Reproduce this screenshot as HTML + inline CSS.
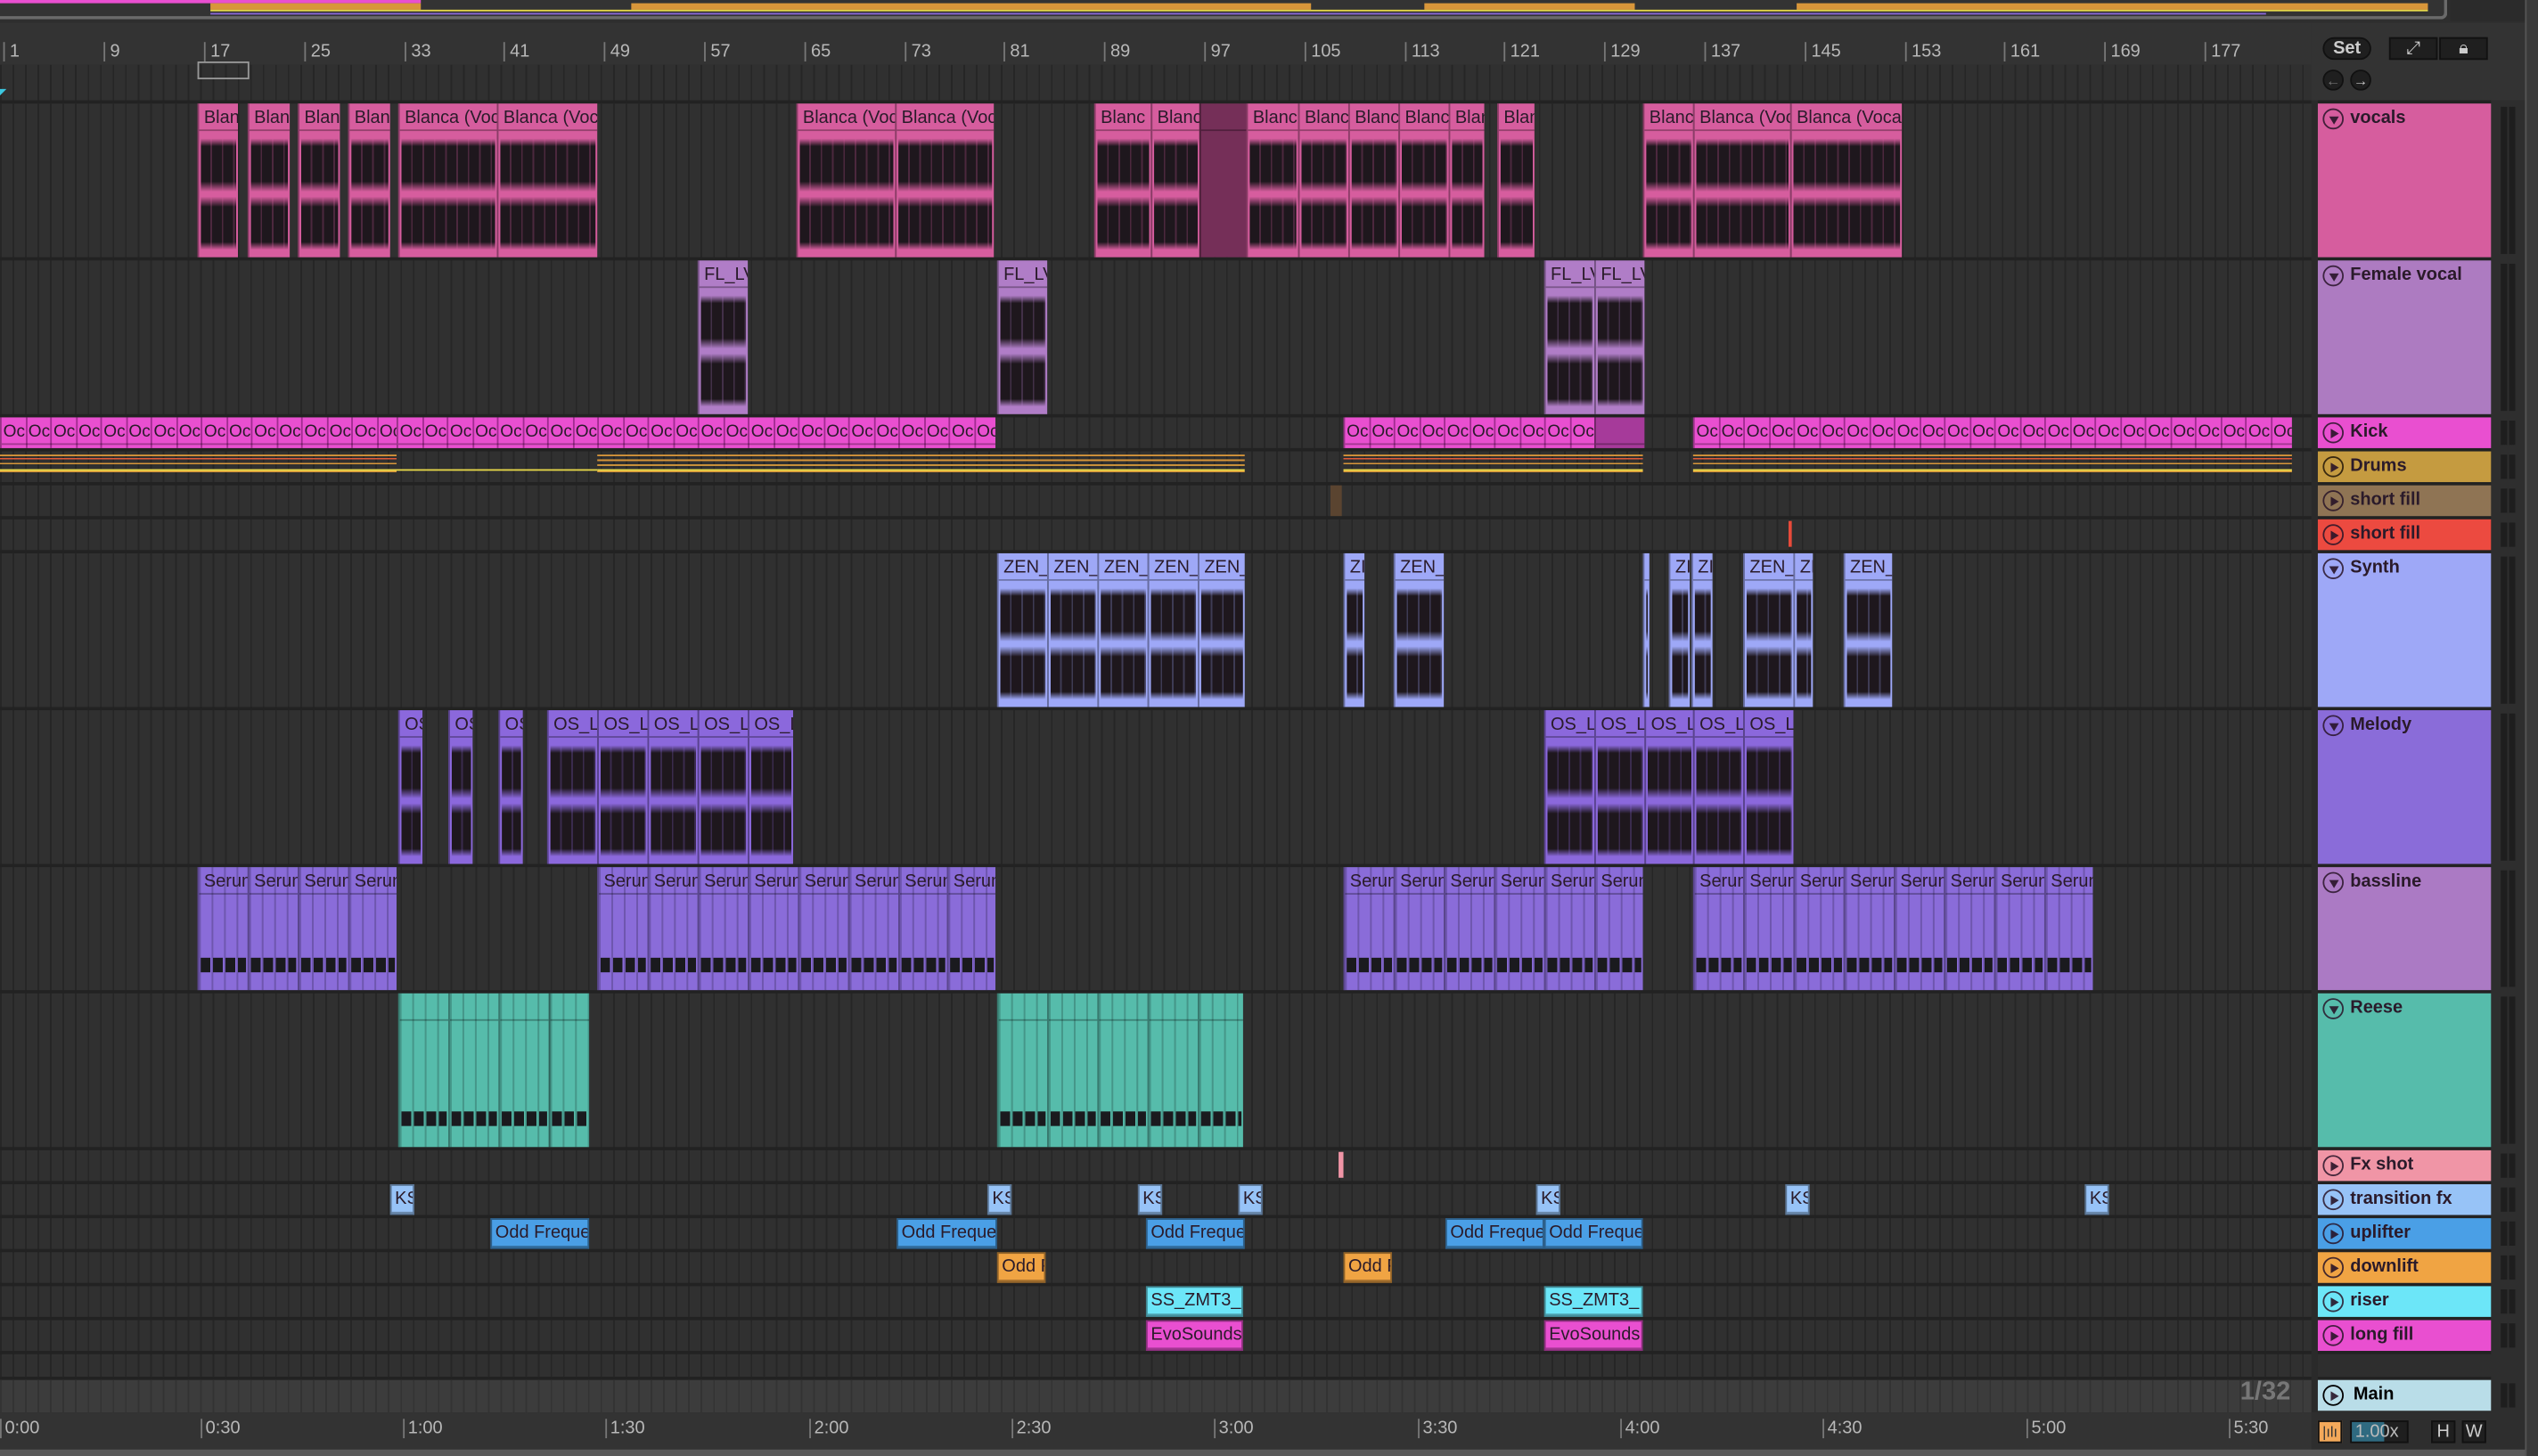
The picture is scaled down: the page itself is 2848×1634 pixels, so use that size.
<!DOCTYPE html>
<html><head><meta charset="utf-8"><style>
*{margin:0;padding:0;box-sizing:border-box}
html,body{width:2848px;height:1634px;overflow:hidden;background:#2b2b2b}
#w{position:absolute;left:0;top:0;width:1568px;height:900px;transform:scale(1.8163,1.8156);transform-origin:0 0;font-family:"Liberation Sans",sans-serif;background:#2e2e2e;overflow:hidden}
.abs{position:absolute}
.grid{position:absolute;left:0;width:1428px;background:#303030 repeating-linear-gradient(90deg,#262626 0 1px,transparent 1px 7.73px)}
.sep{position:absolute;left:0;width:1568px;height:2px;background:#222}
.t{position:absolute;left:0;width:1428px}
.c{position:absolute;top:0;height:100%;border-left:1px solid rgba(0,0,0,.35);overflow:hidden;font-size:11px;line-height:15px;padding-left:3px;padding-top:2px;white-space:nowrap;color:#2a1b2a}
.c::before{content:"";position:absolute;left:0;right:0;top:16px;height:1px;background:rgba(0,0,0,.3)}
.w::after{content:"";position:absolute;left:1px;right:1px;top:17px;bottom:0;background:repeating-linear-gradient(90deg,#1e171d 0 6px,rgba(30,23,29,.75) 6px 7px);-webkit-mask:linear-gradient(transparent 6%,#000 12%,#000 40%,transparent 48%,transparent 52%,#000 60%,#000 88%,transparent 94%);mask:linear-gradient(transparent 6%,#000 12%,#000 40%,transparent 48%,transparent 52%,#000 60%,#000 88%,transparent 94%)}
.m::after{content:"";position:absolute;left:1px;right:1px;bottom:14%;height:9px;background:repeating-linear-gradient(90deg,#1a1a1e 0 6px,transparent 6px 7.7px)}
.m{background-image:repeating-linear-gradient(90deg,rgba(0,0,0,.2) 0 1px,transparent 1px 7.7px)!important}
.v{background:#d65d9e}.fv{background:#b07dc7}.sy{background:#9ea8f7}.me{background:#8b68dc}.ba{background:#8a6cd9}.re{background:#56bcab}
.sm{font-size:11px;line-height:17px;border:1px solid rgba(0,0,0,.4);padding-left:2px;padding-top:0}
.k span{display:inline-block;width:15.5px;height:19px;border-right:1px solid rgba(90,10,80,.5);font-size:10.5px;line-height:19px;text-align:left;padding-left:1px;overflow:hidden}
.hd{position:absolute;left:1432px;width:107px;font-size:11px;font-weight:bold;color:#2a1a2a;padding-left:20px;line-height:19px}
.hd i{position:absolute;left:3px;top:3px;width:13px;height:13px;border:1.3px solid rgba(40,20,40,.85);border-radius:50%}
.hd i::after{content:"";position:absolute;left:4px;top:2.5px;border-left:5px solid rgba(40,20,40,.9);border-top:3.5px solid transparent;border-bottom:3.5px solid transparent}
.hd i.d::after{left:2.5px;top:4px;border-top:5px solid rgba(40,20,40,.9);border-left:3.5px solid transparent;border-right:3.5px solid transparent;border-bottom:0}
.mt{position:absolute;left:1545px;width:10px;background:linear-gradient(90deg,#1e1e1e 0 4px,transparent 4px 5px,#1e1e1e 5px 9px,transparent 9px)}
.ruler span{position:absolute;top:26px;font-size:11px;color:#b8b8b8;border-left:1px solid #777;padding-left:3px;height:12px;line-height:12px}
.tm span{position:absolute;top:877px;font-size:11px;color:#b8b8b8;border-left:1px solid #777;padding-left:2px;line-height:12px}
.btn{position:absolute;background:#1f1f1f;border:1px solid #111;color:#ccc;font-size:11px;text-align:center}
</style></head><body><div id="w">

<div class="abs" style="left:0;top:0;width:1512px;height:12px;background:#333;border-bottom:2px solid #6a6a6a;border-right:2px solid #6a6a6a;border-radius:0 0 4px 0"></div>
<div class="abs" style="left:0;top:0;width:260px;height:2px;background:#e94fd0"></div>
<div class="abs" style="left:130px;top:2px;width:130px;height:4px;background:#d8963a"></div>
<div class="abs" style="left:390px;top:2px;width:420px;height:4px;background:#d8963a"></div>
<div class="abs" style="left:880px;top:2px;width:130px;height:4px;background:#d8963a"></div>
<div class="abs" style="left:1110px;top:2px;width:390px;height:4px;background:#d8963a"></div>
<div class="abs" style="left:130px;top:6px;width:1370px;height:1px;background:#e8d94a"></div>
<div class="abs" style="left:130px;top:8px;width:1270px;height:1px;background:#8b68dc"></div>
<div class="abs" style="left:1514px;top:0;width:54px;height:13px;background:#2b2b2b"></div>

<div class="abs" style="left:0;top:14px;width:1428px;height:26px;background:#333"></div>
<div class="ruler">
<span style="left:2px">1</span><span style="left:64px">9</span><span style="left:126px">17</span><span style="left:188px">25</span><span style="left:250px">33</span><span style="left:311px">41</span><span style="left:373px">49</span><span style="left:435px">57</span><span style="left:497px">65</span><span style="left:559px">73</span><span style="left:620px">81</span><span style="left:682px">89</span><span style="left:744px">97</span><span style="left:806px">105</span><span style="left:868px">113</span><span style="left:929px">121</span><span style="left:991px">129</span><span style="left:1053px">137</span><span style="left:1115px">145</span><span style="left:1177px">153</span><span style="left:1238px">161</span><span style="left:1300px">169</span><span style="left:1362px">177</span>
</div>
<div class="grid" style="top:40px;height:22px"></div>
<div class="abs" style="left:122px;top:38px;width:32px;height:11px;border:1px solid #999"></div>
<div class="abs" style="left:0;top:55px;border-left:4px solid #3cc7e0;border-bottom:4px solid transparent"></div>
<div class="abs" style="left:1428px;top:14px;width:140px;height:48px;background:#333"></div>
<div class="btn" style="left:1435px;top:23px;width:30px;height:14px;border-radius:8px;line-height:13px;font-weight:bold">Set</div>
<div class="btn" style="left:1476px;top:23px;width:30px;height:14px;line-height:12px">⤢</div>
<div class="btn" style="left:1507px;top:23px;width:30px;height:14px;line-height:12px">🔒︎</div>
<div class="btn" style="left:1435px;top:43px;width:13px;height:13px;border-radius:50%;line-height:12px;font-size:9px;color:#777">←</div>
<div class="btn" style="left:1452px;top:43px;width:13px;height:13px;border-radius:50%;line-height:12px;font-size:9px">→</div>

<div class="grid" style="top:64px;height:789px"></div>
<div class="sep" style="top:62px"></div><div class="sep" style="top:159px"></div><div class="sep" style="top:256px"></div><div class="sep" style="top:277px"></div><div class="sep" style="top:298px"></div><div class="sep" style="top:319px"></div><div class="sep" style="top:340px"></div><div class="sep" style="top:437px"></div><div class="sep" style="top:534px"></div><div class="sep" style="top:612px"></div><div class="sep" style="top:709px"></div><div class="sep" style="top:730px"></div><div class="sep" style="top:751px"></div><div class="sep" style="top:772px"></div><div class="sep" style="top:793px"></div><div class="sep" style="top:814px"></div><div class="sep" style="top:835px"></div><div class="sep" style="top:851px"></div>
<div class="abs" style="left:1428px;top:62px;width:4px;height:811px;background:#2a2a2a"></div>
<div class="abs" style="left:1539px;top:62px;width:29px;height:811px;background:#2e2e2e"></div>
<div class="abs" style="left:1560px;top:0;width:8px;height:900px;background:#3a3a3a;border-left:1px solid #555"></div>

<div class="t" style="top:64px;height:95px">
<div class="c v w" style="left:122px;width:25px">Blan</div><div class="c v w" style="left:153px;width:26px">Blan</div><div class="c v w" style="left:184px;width:26px">Blan</div><div class="c v w" style="left:215px;width:26px">Blan</div><div class="c v w" style="left:246px;width:61px">Blanca (Vocal</div><div class="c v w" style="left:307px;width:62px">Blanca (Vocal</div>
<div class="c v w" style="left:492px;width:61px">Blanca (Vocal</div><div class="c v w" style="left:553px;width:61px">Blanca (Vocal</div>
<div class="c v w" style="left:676px;width:35px">Blanc</div><div class="c v w" style="left:711px;width:30px">Blanc</div><div class="c" style="left:741px;width:29px;background:#752f58"></div>
<div class="c v w" style="left:770px;width:32px">Blanc</div><div class="c v w" style="left:802px;width:31px">Blanc</div><div class="c v w" style="left:833px;width:31px">Blanc</div><div class="c v w" style="left:864px;width:31px">Blanc</div><div class="c v w" style="left:895px;width:22px">Blan</div><div class="c v w" style="left:925px;width:23px">Blan</div>
<div class="c v w" style="left:1015px;width:31px">Blanc</div><div class="c v w" style="left:1046px;width:60px">Blanca (Vocal</div><div class="c v w" style="left:1106px;width:69px">Blanca (Vocal</div>
</div>
<div class="t" style="top:161px;height:95px">
<div class="c fv w" style="left:431px;width:31px">FL_LV</div><div class="c fv w" style="left:616px;width:31px">FL_LV</div><div class="c fv w" style="left:954px;width:31px">FL_LV</div><div class="c fv w" style="left:985px;width:31px">FL_LV</div>
</div>
<div class="t k" style="top:258px;height:19px;font-size:0">
<div class="c" style="left:0;width:245px;background:#e94fd0;padding:0"><span>Oc</span><span>Oc</span><span>Oc</span><span>Oc</span><span>Oc</span><span>Oc</span><span>Oc</span><span>Oc</span><span>Oc</span><span>Oc</span><span>Oc</span><span>Oc</span><span>Oc</span><span>Oc</span><span>Oc</span><span>Oc</span></div>
<div class="c" style="left:245px;width:370px;background:#e94fd0;padding:0"><span>Oc</span><span>Oc</span><span>Oc</span><span>Oc</span><span>Oc</span><span>Oc</span><span>Oc</span><span>Oc</span><span>Oc</span><span>Oc</span><span>Oc</span><span>Oc</span><span>Oc</span><span>Oc</span><span>Oc</span><span>Oc</span><span>Oc</span><span>Oc</span><span>Oc</span><span>Oc</span><span>Oc</span><span>Oc</span><span>Oc</span><span>Oc</span></div>
<div class="c" style="left:830px;width:155px;background:#e94fd0;padding:0"><span>Oc</span><span>Oc</span><span>Oc</span><span>Oc</span><span>Oc</span><span>Oc</span><span>Oc</span><span>Oc</span><span>Oc</span><span>Oc</span></div>
<div class="c" style="left:985px;width:31px;background:#a63a9a"></div>
<div class="c" style="left:1046px;width:370px;background:#e94fd0;padding:0"><span>Oc</span><span>Oc</span><span>Oc</span><span>Oc</span><span>Oc</span><span>Oc</span><span>Oc</span><span>Oc</span><span>Oc</span><span>Oc</span><span>Oc</span><span>Oc</span><span>Oc</span><span>Oc</span><span>Oc</span><span>Oc</span><span>Oc</span><span>Oc</span><span>Oc</span><span>Oc</span><span>Oc</span><span>Oc</span><span>Oc</span><span>Oc</span></div>
</div>
<div class="abs" style="left:0;top:281px;width:245px;height:12px;background:repeating-linear-gradient(#d8963a 0 1px,transparent 1px 2px,#e05a3a 2px 3px,transparent 3px 5px,#d8963a 5px 6px,transparent 6px 9px,#e8d94a 9px 10px,transparent 10px)"></div>
<div class="abs" style="left:245px;top:290px;width:124px;height:1px;background:#e8d94a"></div>
<div class="abs" style="left:369px;top:281px;width:400px;height:12px;background:repeating-linear-gradient(#d8963a 0 1px,transparent 1px 3px,#d8963a 3px 4px,transparent 4px 6px,#c8903a 6px 7px,transparent 7px 9px,#e8d94a 9px 10px,transparent 10px)"></div>
<div class="abs" style="left:830px;top:281px;width:185px;height:12px;background:repeating-linear-gradient(#d8963a 0 1px,transparent 1px 2px,#e05a3a 2px 3px,transparent 3px 5px,#d8963a 5px 6px,transparent 6px 9px,#e8d94a 9px 10px,transparent 10px)"></div>
<div class="abs" style="left:1046px;top:281px;width:370px;height:12px;background:repeating-linear-gradient(#d8963a 0 1px,transparent 1px 2px,#e05a3a 2px 3px,transparent 3px 5px,#d8963a 5px 6px,transparent 6px 9px,#e8d94a 9px 10px,transparent 10px)"></div>
<div class="abs" style="left:822px;top:300px;width:7px;height:19px;background:#5a4430"></div>
<div class="abs" style="left:1105px;top:322px;width:2px;height:16px;background:#e84a3a"></div>
<div class="t" style="top:342px;height:95px">
<div class="c sy w" style="left:616px;width:31px">ZEN_</div><div class="c sy w" style="left:647px;width:31px">ZEN_</div><div class="c sy w" style="left:678px;width:31px">ZEN_</div><div class="c sy w" style="left:709px;width:31px">ZEN_</div><div class="c sy w" style="left:740px;width:29px">ZEN_</div>
<div class="c sy w" style="left:830px;width:13px">ZI</div><div class="c sy w" style="left:861px;width:31px">ZEN_</div>
<div class="c sy w" style="left:1015px;width:4px"></div><div class="c sy w" style="left:1031px;width:13px">ZI</div><div class="c sy w" style="left:1045px;width:13px">ZI</div><div class="c sy w" style="left:1077px;width:31px">ZEN_</div><div class="c sy w" style="left:1108px;width:12px">ZI</div><div class="c sy w" style="left:1139px;width:30px">ZEN_</div>
</div>
<div class="t" style="top:439px;height:95px">
<div class="c me w" style="left:246px;width:15px">OS</div><div class="c me w" style="left:277px;width:15px">OS</div><div class="c me w" style="left:308px;width:15px">OS</div><div class="c me w" style="left:338px;width:31px">OS_L</div><div class="c me w" style="left:369px;width:31px">OS_L</div><div class="c me w" style="left:400px;width:31px">OS_L</div><div class="c me w" style="left:431px;width:31px">OS_L</div><div class="c me w" style="left:462px;width:28px">OS_L</div>
<div class="c me w" style="left:954px;width:31px">OS_L</div><div class="c me w" style="left:985px;width:31px">OS_L</div><div class="c me w" style="left:1016px;width:30px">OS_L</div><div class="c me w" style="left:1046px;width:31px">OS_L</div><div class="c me w" style="left:1077px;width:31px">OS_L</div>
</div>
<div class="t" style="top:536px;height:76px">
<div class="c ba m" style="left:122px;width:31px">Serum</div><div class="c ba m" style="left:153px;width:31px">Serum</div><div class="c ba m" style="left:184px;width:31px">Serum</div><div class="c ba m" style="left:215px;width:30px">Serum</div>
<div class="c ba m" style="left:369px;width:31px">Serum</div><div class="c ba m" style="left:400px;width:31px">Serum</div><div class="c ba m" style="left:431px;width:31px">Serum</div><div class="c ba m" style="left:462px;width:31px">Serum</div><div class="c ba m" style="left:493px;width:31px">Serum</div><div class="c ba m" style="left:524px;width:31px">Serum</div><div class="c ba m" style="left:555px;width:30px">Serum</div><div class="c ba m" style="left:585px;width:30px">Serum</div>
<div class="c ba m" style="left:830px;width:31px">Serum</div><div class="c ba m" style="left:861px;width:31px">Serum</div><div class="c ba m" style="left:892px;width:31px">Serum</div><div class="c ba m" style="left:923px;width:31px">Serum</div><div class="c ba m" style="left:954px;width:31px">Serum</div><div class="c ba m" style="left:985px;width:30px">Serum</div>
<div class="c ba m" style="left:1046px;width:31px">Serum</div><div class="c ba m" style="left:1077px;width:31px">Serum</div><div class="c ba m" style="left:1108px;width:31px">Serum</div><div class="c ba m" style="left:1139px;width:31px">Serum</div><div class="c ba m" style="left:1170px;width:31px">Serum</div><div class="c ba m" style="left:1201px;width:31px">Serum</div><div class="c ba m" style="left:1232px;width:31px">Serum</div><div class="c ba m" style="left:1263px;width:30px">Serum</div>
</div>
<div class="t" style="top:614px;height:95px">
<div class="c re m" style="left:246px;width:31px"></div><div class="c re m" style="left:277px;width:31px"></div><div class="c re m" style="left:308px;width:31px"></div><div class="c re m" style="left:339px;width:25px"></div>
<div class="c re m" style="left:616px;width:31px"></div><div class="c re m" style="left:647px;width:31px"></div><div class="c re m" style="left:678px;width:31px"></div><div class="c re m" style="left:709px;width:31px"></div><div class="c re m" style="left:740px;width:28px"></div>
</div>
<div class="abs" style="left:827px;top:712px;width:3px;height:16px;background:#f095a6"></div>
<div class="t" style="top:732px;height:19px">
<div class="c sm" style="left:241px;width:15px;background:#97c3f7">KS</div><div class="c sm" style="left:610px;width:15px;background:#97c3f7">KS</div><div class="c sm" style="left:703px;width:15px;background:#97c3f7">KS</div><div class="c sm" style="left:765px;width:15px;background:#97c3f7">KS</div><div class="c sm" style="left:949px;width:15px;background:#97c3f7">KS</div><div class="c sm" style="left:1103px;width:15px;background:#97c3f7">KS</div><div class="c sm" style="left:1288px;width:15px;background:#97c3f7">KS</div>
</div>
<div class="t" style="top:753px;height:19px">
<div class="c sm" style="left:303px;width:61px;background:#4a9fe6">Odd Frequency</div><div class="c sm" style="left:554px;width:62px;background:#4a9fe6">Odd Frequency</div><div class="c sm" style="left:708px;width:61px;background:#4a9fe6">Odd Frequency</div><div class="c sm" style="left:893px;width:61px;background:#4a9fe6">Odd Frequency</div><div class="c sm" style="left:954px;width:61px;background:#4a9fe6">Odd Frequency</div>
</div>
<div class="t" style="top:774px;height:19px">
<div class="c sm" style="left:616px;width:30px;background:#f0a443">Odd F</div><div class="c sm" style="left:830px;width:30px;background:#f0a443">Odd F</div>
</div>
<div class="t" style="top:795px;height:19px">
<div class="c sm" style="left:708px;width:60px;background:#6ce6f8">SS_ZMT3_</div><div class="c sm" style="left:954px;width:61px;background:#6ce6f8">SS_ZMT3_</div>
</div>
<div class="t" style="top:816px;height:19px">
<div class="c sm" style="left:708px;width:60px;background:#e94fd0">EvoSounds</div><div class="c sm" style="left:954px;width:61px;background:#e94fd0">EvoSounds</div>
</div>
<div class="abs" style="left:0;top:853px;width:1428px;height:20px;background:#3c3c3c repeating-linear-gradient(90deg,#333 0 1px,transparent 1px 7.73px)"></div>
<div class="abs" style="left:1384px;top:852px;font-size:16px;font-weight:bold;color:#777">1/32</div>
<div class="abs" style="left:0;top:873px;width:1428px;height:27px;background:#333"></div>
<div class="tm"><span style="left:0">0:00</span><span style="left:124px">0:30</span><span style="left:249px">1:00</span><span style="left:374px">1:30</span><span style="left:500px">2:00</span><span style="left:625px">2:30</span><span style="left:750px">3:00</span><span style="left:876px">3:30</span><span style="left:1001px">4:00</span><span style="left:1126px">4:30</span><span style="left:1252px">5:00</span><span style="left:1377px">5:30</span></div>
<div class="abs" style="left:0;top:896px;width:1560px;height:4px;background:#5a5a5a"></div>

<div class="hd" style="top:64px;height:95px;background:#d65d9e"><i class="d"></i>vocals</div>
<div class="hd" style="top:161px;height:95px;background:#ad7bc1"><i class="d"></i>Female vocal</div>
<div class="hd" style="top:258px;height:19px;background:#e94fd0"><i></i>Kick</div>
<div class="hd" style="top:279px;height:19px;background:#c59b40"><i style="border-color:#3a2a10"></i>Drums</div>
<div class="hd" style="top:300px;height:19px;background:#8f7454"><i></i>short fill</div>
<div class="hd" style="top:321px;height:19px;background:#ec4a40"><i></i>short fill</div>
<div class="hd" style="top:342px;height:95px;background:#9ea8f7"><i class="d"></i>Synth</div>
<div class="hd" style="top:439px;height:95px;background:#8a6cd9"><i class="d"></i>Melody</div>
<div class="hd" style="top:536px;height:76px;background:#ab7ac4"><i class="d"></i>bassline</div>
<div class="hd" style="top:614px;height:95px;background:#56bcab"><i class="d"></i>Reese</div>
<div class="hd" style="top:711px;height:19px;background:#f095a6"><i></i>Fx shot</div>
<div class="hd" style="top:732px;height:19px;background:#97c3f7"><i></i>transition fx</div>
<div class="hd" style="top:753px;height:19px;background:#4a9fe6"><i></i>uplifter</div>
<div class="hd" style="top:774px;height:19px;background:#f0a443"><i></i>downlift</div>
<div class="hd" style="top:795px;height:19px;background:#6ce6f8"><i></i>riser</div>
<div class="hd" style="top:816px;height:19px;background:#e94fd0"><i></i>long fill</div>
<div class="hd" style="top:853px;height:19px;background:#b9dde8;color:#000;padding-left:22px"><i style="border-color:#000"></i>Main</div>
<div class="mt" style="top:66px;height:91px"></div><div class="mt" style="top:163px;height:91px"></div><div class="mt" style="top:260px;height:15px"></div><div class="mt" style="top:281px;height:15px"></div><div class="mt" style="top:302px;height:15px"></div><div class="mt" style="top:323px;height:15px"></div><div class="mt" style="top:344px;height:91px"></div><div class="mt" style="top:441px;height:91px"></div><div class="mt" style="top:538px;height:72px"></div><div class="mt" style="top:616px;height:91px"></div><div class="mt" style="top:713px;height:15px"></div><div class="mt" style="top:734px;height:15px"></div><div class="mt" style="top:755px;height:15px"></div><div class="mt" style="top:776px;height:15px"></div><div class="mt" style="top:797px;height:15px"></div><div class="mt" style="top:818px;height:15px"></div><div class="mt" style="top:855px;height:15px"></div>
<div class="abs" style="left:1432px;top:878px;width:15px;height:14px;background:#f4a95a;border:1px solid #111;font-size:9px;text-align:center;line-height:12px;color:#333">|ılı</div>
<div class="abs" style="left:1452px;top:878px;width:36px;height:14px;background:#1f1f1f;border:1px solid #111;font-size:11px;color:#bbb;line-height:12px;padding-left:2px"><span style="position:absolute;left:0;top:0;width:20px;height:12px;background:#2f6a80"></span><span style="position:relative">1.00x</span></div>
<div class="btn" style="left:1502px;top:878px;width:15px;height:14px;line-height:12px">H</div>
<div class="btn" style="left:1521px;top:878px;width:15px;height:14px;line-height:12px">W</div>
</div></body></html>
